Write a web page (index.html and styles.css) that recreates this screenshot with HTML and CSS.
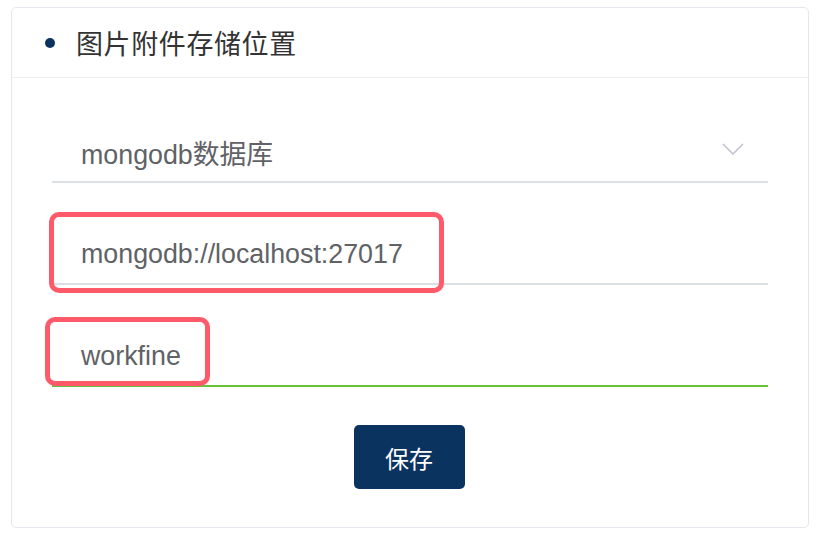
FILE: index.html
```html
<!DOCTYPE html>
<html lang="zh">
<head>
<meta charset="utf-8">
<title>图片附件存储位置</title>
<link rel="stylesheet" href="styles.css">
</head>
<body>
<div class="card">
  <div class="card-header">
    <span class="dot"></span>
    <span class="title">图片附件存储位置</span>
  </div>
  <div class="card-body">
    <div class="field select">
      <span class="value">mongodb数据库</span>
      <svg class="chevron" width="22" height="12" viewBox="0 0 22 12"><path d="M1 1 L11 11 L21 1" fill="none" stroke="#c0c4cc" stroke-width="1.6"/></svg>
    </div>
    <div class="field">
      <span class="value">mongodb://localhost:27017</span>
      <span class="mark mark-url"></span>
    </div>
    <div class="field active">
      <span class="value">workfine</span>
      <span class="mark mark-db"></span>
    </div>
    <div class="actions">
      <button class="btn">保存</button>
    </div>
  </div>
</div>
</body>
</html>
```
FILE: styles.css
```css
* { box-sizing: border-box; }
html, body { margin: 0; padding: 0; background: #ffffff; }
body {
  font-family: "Liberation Sans", "Noto Sans CJK SC", sans-serif;
  padding: 7px 19px 0 11px;
}
.card {
  border: 1px solid #e4e7ed;
  border-radius: 5px;
  height: 521px;
  background: #fff;
}
.card-header {
  height: 70px;
  border-bottom: 1px solid #ebeef5;
  display: flex;
  align-items: center;
  padding-left: 33px;
}
.dot {
  width: 10px;
  height: 10px;
  border-radius: 50%;
  background: #0b3360;
  margin-right: 21px;
}
.title {
  font-family: "Noto Sans CJK SC", sans-serif;
  font-size: 27px;
  color: #333333;
  letter-spacing: 0.6px;
}
.card-body {
  padding: 41px 40px 0 40px;
}
.field {
  position: relative;
  height: 64px;
  border-bottom: 2px solid #dcdfe6;
  display: flex;
  align-items: center;
  padding-left: 29px;
  padding-right: 24px;
  padding-top: 4px;
  margin-bottom: 38px;
}
.field.active { border-bottom-color: #67c23a; }
.value {
  font-size: 26.8px;
  color: #606266;
  flex: 1;
}
.chevron { display: block; margin-top: -6px; }
.mark {
  position: absolute;
  border: 5px solid #ff5a6a;
  border-radius: 10px;
}
.mark-url { left: -3px; top: -9px; width: 395px; height: 81px; }
.mark-db { left: -7px; top: -6px; width: 165px; height: 69px; }
.actions {
  display: flex;
  justify-content: center;
}
.btn {
  width: 111px;
  height: 64px;
  border: none;
  border-radius: 5px;
  background: #0b3360;
  color: #ffffff;
  font-family: "Noto Sans CJK SC", sans-serif;
  font-size: 24px;
  padding: 0;
  margin-left: -2px;
}
```
